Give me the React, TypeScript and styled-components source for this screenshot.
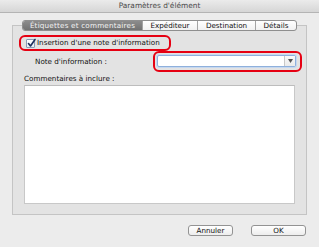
import React from 'react';
import styled, { createGlobalStyle } from 'styled-components';

const GlobalStyle = createGlobalStyle`
  html, body {
    margin: 0;
    padding: 0;
    background: #ececec;
  }
  body {
    font-family: 'DejaVu Sans', 'Liberation Sans', sans-serif;
    font-size: 7.2px;
    color: #111;
  }
`;

const Window = styled.div`
  width: 319px;
  height: 247px;
  background: #ececec;
  display: flex;
  flex-direction: column;
  overflow: hidden;
`;

const TitleBar = styled.div`
  height: 12px;
  border-bottom: 1px solid #b4b4b4;
  background: linear-gradient(#ebebeb, #d6d6d6);
  display: flex;
  align-items: center;
  justify-content: center;
  color: #4a4a4a;
  font-size: 7.4px;
  line-height: 12px;
`;

const TabBox = styled.div`
  margin: 12px 12px 0 12px;
  height: 188px;
  border: 1px solid #c4c4c4;
  background: #e3e3e3;
  display: flex;
  flex-direction: column;
`;

const TabStrip = styled.div`
  align-self: center;
  margin-top: -6px;
  display: flex;
  height: 11px;
  border: 1px solid #8f8f8f;
  border-radius: 3px;
  overflow: hidden;
  background: linear-gradient(#ffffff, #f1f1f1);
  box-sizing: border-box;
`;

const Tab = styled.div<{ $active?: boolean; $w: number }>`
  width: ${(p) => p.$w}px;
  display: flex;
  align-items: center;
  justify-content: center;
  font-size: 7.2px;
  line-height: 9px;
  white-space: nowrap;
  overflow: hidden;
  letter-spacing: ${(p) => (p.$active ? '0.2px' : '0')};
  color: ${(p) => (p.$active ? '#f4f4f4' : '#111')};
  background: ${(p) => (p.$active ? 'linear-gradient(#8c8c8c, #727272)' : 'transparent')};
  & + & {
    border-left: 1px solid #a4a4a4;
  }
`;

const CheckHighlight = styled.div`
  margin: 4px 0 0 6px;
  width: 152px;
  height: 16px;
  box-sizing: border-box;
  border: 2px solid #e60012;
  border-radius: 6px;
  display: flex;
  align-items: center;
  padding-left: 5px;
  gap: 2px;
`;

const CheckBox = styled.div`
  width: 9px;
  height: 9px;
  flex-shrink: 0;
  box-sizing: border-box;
  border: 1px solid #8a9bb5;
  border-radius: 1px;
  background: linear-gradient(#ffffff, #e6ecf5);
  position: relative;
  svg {
    position: absolute;
    left: -1px;
    top: -2px;
  }
`;

const Label = styled.span`
  font-size: 7.2px;
  line-height: 10px;
  white-space: nowrap;
  color: #111;
`;

const NoteRow = styled.div`
  display: flex;
  align-items: center;
  padding-left: 22px;
  height: 21px;
`;

const SelectHighlight = styled.div`
  margin-left: auto;
  margin-right: 4px;
  width: 149px;
  height: 21px;
  box-sizing: border-box;
  border: 2px solid #e60012;
  border-radius: 6px;
  padding: 2px 4px 3px 2px;
`;

const Select = styled.div`
  height: 12px;
  box-sizing: border-box;
  border: 1px solid #8fb0dc;
  box-shadow: 0 0 0 1px #c6d8f0;
  border-radius: 2px;
  background: #ffffff;
  display: flex;
  justify-content: flex-end;
`;

const SelectArrow = styled.div`
  width: 10px;
  border-left: 1px solid #c8c8c8;
  display: flex;
  align-items: center;
  justify-content: center;
  background: linear-gradient(#fafafa, #eaeaea);
`;

const SectionLabel = styled(Label)`
  display: block;
  margin: 2px 0 0 11px;
  height: 10px;
`;

const CommentArea = styled.div`
  margin: 1px 0 0 11px;
  width: 271px;
  height: 119px;
  box-sizing: border-box;
  background: #ffffff;
  border: 1px solid #c8c8c8;
  border-top-color: #bdbdbd;
`;

const ButtonRow = styled.div`
  display: flex;
  justify-content: flex-end;
  gap: 18px;
  margin: 10px 13px 0 0;
`;

const Button = styled.div<{ $w: number }>`
  width: ${(p) => p.$w}px;
  height: 11px;
  box-sizing: border-box;
  border: 1px solid #939393;
  border-radius: 3px;
  background: linear-gradient(#ffffff, #ededed);
  display: flex;
  align-items: center;
  justify-content: center;
  font-size: 7.2px;
  line-height: 9px;
  color: #111;
`;

export default function App() {
  return (
    <>
      <GlobalStyle />
      <Window>
        <TitleBar>Paramètres d'élément</TitleBar>
        <TabBox>
          <TabStrip>
            <Tab $active $w={119}>Étiquettes et commentaires</Tab>
            <Tab $w={54}>Expéditeur</Tab>
            <Tab $w={57}>Destination</Tab>
            <Tab $w={40}>Détails</Tab>
          </TabStrip>
          <CheckHighlight>
            <CheckBox>
              <svg width="11" height="11" viewBox="0 0 11 11">
                <path d="M2.5 5.5 L4.5 8 L9 1.5" fill="none" stroke="#1d2f5c" strokeWidth="1.6" strokeLinecap="round" strokeLinejoin="round" />
              </svg>
            </CheckBox>
            <Label>Insertion d'une note d'information</Label>
          </CheckHighlight>
          <NoteRow>
            <Label>Note d'information :</Label>
            <SelectHighlight>
              <Select>
                <SelectArrow>
                  <svg width="5" height="4" viewBox="0 0 5 4">
                    <path d="M0 0 L5 0 L2.5 4 Z" fill="#555" />
                  </svg>
                </SelectArrow>
              </Select>
            </SelectHighlight>
          </NoteRow>
          <SectionLabel>Commentaires à inclure :</SectionLabel>
          <CommentArea />
        </TabBox>
        <ButtonRow>
          <Button $w={45}>Annuler</Button>
          <Button $w={55}>OK</Button>
        </ButtonRow>
      </Window>
    </>
  );
}
